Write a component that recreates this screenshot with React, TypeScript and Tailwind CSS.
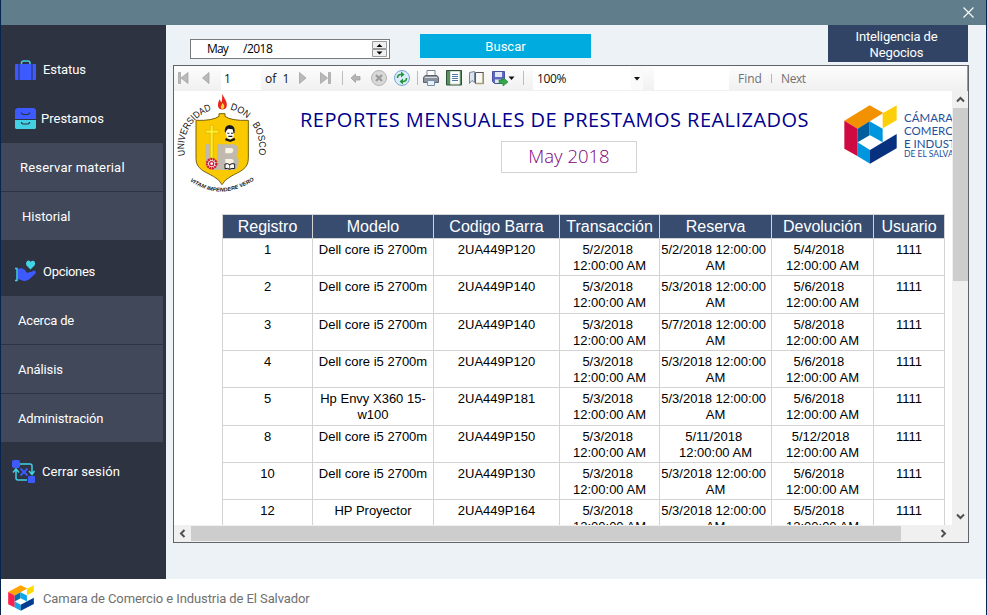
import React from "react";

const din = "font-['Roboto','Liberation_Sans',sans-serif]";
const ui = "font-['Open_Sans','Noto_Sans',sans-serif]";
const arial = "font-['Liberation_Sans',Arial,sans-serif]";

const rows = [
  { h: "h-[37px]", c: ["1", "Dell core i5 2700m", "2UA449P120", "5/2/2018 \n12:00:00 AM", "5/2/2018 12:00:00 \nAM", "5/4/2018  \n12:00:00 AM", "1111"] },
  { h: "h-[38px]", c: ["2", "Dell core i5 2700m", "2UA449P140", "5/3/2018 \n12:00:00 AM", "5/3/2018 12:00:00 \nAM", "5/6/2018  \n12:00:00 AM", "1111"] },
  { h: "h-[37px]", c: ["3", "Dell core i5 2700m", "2UA449P140", "5/3/2018 \n12:00:00 AM", "5/7/2018 12:00:00 \nAM", "5/8/2018  \n12:00:00 AM", "1111"] },
  { h: "h-[37px]", c: ["4", "Dell core i5 2700m", "2UA449P120", "5/3/2018 \n12:00:00 AM", "5/3/2018 12:00:00 \nAM", "5/6/2018  \n12:00:00 AM", "1111"] },
  { h: "h-[38px]", c: ["5", "Hp Envy X360 15-\nw100", "2UA449P181", "5/3/2018 \n12:00:00 AM", "5/3/2018 12:00:00 \nAM", "5/6/2018  \n12:00:00 AM", "1111"] },
  { h: "h-[37px]", c: ["8", "Dell core i5 2700m", "2UA449P150", "5/3/2018 \n12:00:00 AM", "5/11/2018 \n12:00:00 AM", "5/12/2018 \n12:00:00 AM", "1111"] },
  { h: "h-[37px]", c: ["10", "Dell core i5 2700m", "2UA449P130", "5/3/2018 \n12:00:00 AM", "5/3/2018 12:00:00 \nAM", "5/6/2018  \n12:00:00 AM", "1111"] },
  { h: "h-[37px]", c: ["12", "HP Proyector", "2UA449P164", "5/3/2018 \n12:00:00 AM", "5/3/2018 12:00:00 \nAM", "5/5/2018  \n12:00:00 AM", "1111"] },
];
const headers = ["Registro", "Modelo", "Codigo Barra", "Transacción", "Reserva", "Devolución", "Usuario"];
const cols = "grid grid-cols-[90px_121px_126px_100px_112px_102px_71px]";

function ChamberMark({ className, bright }: { className: string; bright?: boolean }) {
  const c = bright
    ? { o: "#ffa400", r: "#ff1f4b", y: "#ffdc00", d: "#0070ad", l: "#12a8ea", n: "#003d91" }
    : { o: "#f39200", r: "#cf0a42", y: "#fccf0a", d: "#005e9c", l: "#0096df", n: "#07307f" };
  return (
    <svg viewBox="42 46 159 177" preserveAspectRatio="none" className={className}>
      <path d="M43 93 119 47 160 70 83 117Z" fill={c.o} />
      <path d="M43 93 83 117V200L43 177Z" fill={c.r} />
      <path d="M158 71 200 47V92L158 116Z" fill={c.y} />
      <path d="M83 117 119 95V137L83 158Z" fill={c.d} />
      <path d="M119 95 158 117V158L119 136Z" fill={c.l} />
      <path d="M83 158 120 181V222L83 200Z" fill={c.l} />
      <path d="M120 181 200 133V176L120 222Z" fill={c.n} />
    </svg>
  );
}

function UniversityCrest() {
  return (
    <svg viewBox="12 3 318 321" className="h-[107px] w-[106px] shrink-0">
      <defs>
        <path id="arcL" d="M45 196A116 116 0 0 1 131 59" />
        <path id="arcR" d="M180 58A116 116 0 0 1 264 200" />
        <path id="arcB" d="M60 273Q155 338 256 268" />
      </defs>
      <path d="M78 91Q128 93 147 79V71H165V79Q184 93 235 91V205C235 238 209 244 183 259Q163 269 156 284Q149 269 130 259C104 244 78 238 78 205Z" fill="#fbc900" stroke="#77620f" strokeWidth="3" />
      <path d="M158 12C163 29 173 33 170 49C168 62 145 62 144 48C143 39 147 33 149 28L154 38C158 28 155 20 158 12Z" fill="#e8281c" />
      <path d="M158 39C166 48 163 56 157 57C150 55 152 48 158 39Z" fill="#ffd33b" />
      <path d="M106 163H119V205Q119 222 132 222Q142 222 142 205V163H153V239H126Q106 235 106 211Z" fill="#bfb9b0" />
      <path d="M153 163H190Q206 165 205 180Q205 192 198 198Q207 202 206 216Q205 240 189 240H153Z" fill="#bfb9b0" />
      <path d="M166 174H183Q190 174 190 181T183 190H166ZM166 207H183Q191 207 191 214T183 222H166Z" fill="#f8f4e4" />
      <path d="M121 106H129V121H146V129H129V213H121V129H107V121H121Z" fill="#ffef2b" stroke="#b58a00" />
      <circle cx="125" cy="221" r="14" fill="#fff" stroke="#cf1930" strokeWidth="7" strokeDasharray="6 1.5" />
      <circle cx="125" cy="221" r="6" fill="#fff" stroke="#cf1930" strokeWidth="4" />
      <path d="M166 123Q164 105 180 105Q195 106 193 124L190 142Q181 151 171 143Z" fill="#fff" />
      <path d="M165 130Q161 107 178 105Q197 105 194 128L191 131 188 118 174 116 169 122ZM172 128H178V131H172ZM183 128H189V131H183ZM175 137H187V141H175ZM168 144 181 149 193 143 196 150 181 156 165 151Z" fill="#151515" />
      <path d="M165 222Q173 219 179 224Q186 219 194 222V236Q185 233 179 238Q173 233 165 236Z" fill="#fff" stroke="#151515" strokeWidth="3" />
      <path d="M179 223V237" stroke="#151515" strokeWidth="2" />
      <g fontFamily="Liberation Sans, sans-serif" fill="#111">
        <text fontSize="29"><textPath href="#arcL" textLength="172" lengthAdjust="spacingAndGlyphs">UNIVERSIDAD</textPath></text>
        <text fontSize="29"><textPath href="#arcR" textLength="178" lengthAdjust="spacingAndGlyphs">DON &#160; BOSCO</textPath></text>
        <text fontSize="16" fontWeight="bold" fontStyle="italic"><textPath href="#arcB" textLength="206" lengthAdjust="spacingAndGlyphs">VITAM IMPENDERE VERO</textPath></text>
      </g>
    </svg>
  );
}

function Toolbar() {
  return (
    <div className={`flex h-[25px] items-center border-r border-[#9a9a9a] bg-gradient-to-b from-[#fdfdfd] to-[#f0f0f0] text-[12px] text-[#111] ${ui}`}>
      <svg className="h-[25px] w-[47px]" viewBox="0 0 47 25" fill="#b9b9b9" stroke="#9d9d9d" strokeWidth=".7">
        <path d="M4.5 6.5H6.5V17.5H4.5ZM14 6.5V17.5L7 12ZM35 6.5V17.5L28.500 12Z" />
      </svg>
      <span className="flex h-[23px] w-10 items-center bg-white pl-[3px]">1</span>
      <span className="w-9 whitespace-pre pl-1">of{"  "}1</span>
      <svg className="h-[25px] w-[124px]" viewBox="297 66 124 25" fill="none">
        <path d="M299.500 72.500V83.500L306 78ZM320.500 72.500V83.500L327.500 78ZM328.500 72.500H330.500V83.500H328.500Z" fill="#b9b9b9" stroke="#9d9d9d" strokeWidth=".7" />
        <path d="M342.500 71V85M417.500 71V85" stroke="#bdbdbd" />
        <path d="M351 78 355.500 74V76.500H360V80H355.500V82.500Z" fill="#b5b5b5" stroke="#999" strokeWidth=".7" />
        <circle cx="379" cy="78" r="7.500" fill="#d9d9d9" stroke="#b4b4b4" />
        <path d="M376 75 382 81M382 75 376 81" stroke="#9b9b9b" strokeWidth="2.300" />
        <circle cx="402" cy="78" r="7.500" fill="#dcecf9" stroke="#78a7d3" />
        <path d="M397.500 78Q397.500 74.500 401 74.500M406.500 78Q406.500 81.500 403 81.500" stroke="#22973b" strokeWidth="1.600" />
        <path d="M401 71.500 404.500 74.500 401 77.500ZM403 78.500 399.500 81.500 403 84.500Z" fill="#22973b" />
      </svg>
      <svg className="h-[25px] w-[112px]" viewBox="421 66 112 25" fill="none">
        <path d="M427 70.500H435V76H427Z" fill="#fff" stroke="#788493" />
        <path d="M425 75.500H437L438.500 77.500V82.500H423.500V77.500Z" fill="#8c929c" stroke="#5d6470" />
        <path d="M425 77.500H437" stroke="#d7dae0" />
        <path d="M427.500 80.500H434.500V85.500H427.500Z" fill="#e7f1fb" stroke="#7590aa" />
        <path d="M446.500 70.500H461.500V85H446.500Z" fill="#5b8f61" stroke="#2d5237" />
        <path d="M450.500 71.500H459.500V84H450.500Z" fill="#fff" stroke="#d8e0d8" />
        <path d="M452 74.500H458M452 76.500H458M452 78.500H458M452 80.500H458" stroke="#4f76a8" />
        <path d="M469.500 72.500 474.500 71.500V82.500L472 80.500 469.500 83.500Z" fill="#dce3ed" stroke="#76879d" />
        <path d="M475.500 72.500H483.500V83.500H475.500Z" fill="#f8f8f4" stroke="#55585e" />
        <path d="M476 83.500H483V73" stroke="#aaa17e" strokeWidth="1.500" />
        <path d="M492.500 71.500H504.500V83.500H494.500L492.500 81.500Z" fill="#5e69be" stroke="#4851a0" />
        <path d="M495 72H502V77H495ZM495 79.500H501V83H495Z" fill="#e2e7f6" />
        <path d="M499 80H503V77L508 82 503 86V83.500H499Z" fill="#33a94a" stroke="#1f7d31" strokeWidth=".6" />
        <path d="M508.500 76.500H514.500L511.500 80Z" fill="#111" />
        <path d="M523.500 71V85" stroke="#bdbdbd" />
      </svg>
      <div className="flex h-[23px] w-[110px] items-center justify-between bg-white pl-1">
        <span className="tracking-[-0.4px]">100%</span>
        <span className="flex h-full w-3 items-center justify-center bg-[#fafafa]">
          <svg className="h-[4px] w-[6px]" viewBox="0 0 6 4"><path d="M0 0H6L3 3.500Z" fill="#111" /></svg>
        </span>
      </div>
      <span className="ml-[11px] h-[23px] w-[75px] bg-white" />
      <span className="ml-[9px] w-[33px] text-[#717171]">Find</span>
      <span className="h-[9px] w-[10px] border-l border-[#b5b5b5]" />
      <span className="tracking-[-0.4px] text-[#717171]">Next</span>
    </div>
  );
}

function Report() {
  return (
    <div className="h-[434px] w-[778px] overflow-hidden bg-white">
      <div className="flex h-[123px]">
        <UniversityCrest />
        <div className="flex w-[564px] shrink-0 flex-col pt-[15px]">
          <div className={`ml-[20px] whitespace-nowrap text-[20px] leading-[28px] tracking-[0.460px] text-[#00008b] ${ui}`}>REPORTES MENSUALES DE PRESTAMOS REALIZADOS</div>
          <div className={`mt-[7px] ml-[221px] flex h-8 w-[136px] items-center justify-center border border-[#d3d3d3] pb-[2px] text-[18.500px] font-light text-[#800080] ${ui}`}>May 2018</div>
        </div>
        <ChamberMark className="mt-[14px] h-[59px] w-[53px] shrink-0" />
        <div className="w-[55px] shrink-0 overflow-hidden whitespace-nowrap pl-[7px] pt-[20px] font-['Lato',sans-serif] text-[11.500px] leading-[13px] text-[#24509a]">
          <div>CÁMARA DE</div>
          <div>COMERCIO</div>
          <div>E INDUSTRIA</div>
          <div className="text-[8.500px] leading-[9px]">DE EL SALVADOR</div>
        </div>
      </div>
      <div className={`ml-[48px] w-[723px] border-l border-t border-[#d3d3d3] ${arial}`}>
        <div className={`${cols} h-6 text-[16px] leading-[23px] text-white`}>
          {headers.map((h) => (
            <div key={h} className="flex justify-center border-r border-b border-[#d3d3d3] bg-[#384c70]">{h}</div>
          ))}
        </div>
        {rows.map((r) => (
          <div key={r.c[0]} className={`${cols} ${r.h} text-[13px] leading-4 text-black`}>
            {r.c.map((t, i) => (
              <div key={i} className="flex justify-center whitespace-pre border-r border-b border-[#d3d3d3] pt-[3px] text-center">{t}</div>
            ))}
          </div>
        ))}
      </div>
    </div>
  );
}

function Chevron({ d }: { d: string }) {
  return (
    <svg className="h-[9px] w-[9px]" viewBox="0 0 9 9" fill="none" stroke="#505050" strokeWidth="2"><path d={d} /></svg>
  );
}

function Sub({ children, pad }: { children: React.ReactNode; pad: string }) {
  return <div className={`flex h-12 w-[162px] items-center bg-[#40485a] pt-[2px] ${pad}`}>{children}</div>;
}

function Sidebar() {
  return (
    <nav className={`flex h-[554px] w-[165px] shrink-0 flex-col bg-[#2d3341] text-[13px] text-white ${din}`}>
      <div className="flex h-[69px] items-center pt-[20px] pl-[14px]">
        <svg className="h-5 w-[21px]" viewBox="0 0 21 20">
          <path d="M6.500 5V3Q6.500 1 8.500 1H13Q15 1 15 3V5" fill="none" stroke="#43cfe4" strokeWidth="1.500" />
          <path d="M1 4H3.500V20H1Q0 20 0 19V5Q0 4 1 4ZM5 4H16V20H5ZM17.500 4H20Q21 4 21 5V19Q21 20 20 20H17.500Z" fill="#3d5afe" />
          <path d="M3.500 4H5V20H3.500ZM16 4H17.500V20H16Z" fill="#3145b8" />
        </svg>
        <span className="ml-[7px] tracking-[-0.1px]">Estatus</span>
      </div>
      <div className="flex h-[49px] items-center pl-[14px]">
        <svg className="h-[21px] w-[21px]" viewBox="0 0 21 21">
          <path d="M2 0H19L21 2V11H0V2Z" fill="#3d5afe" /><path d="M0 12H21V20L20 21H1L0 20Z" fill="#43cfe4" />
          <path d="M6.500 4.500V5.500L8 6.500H13L14.500 5.500V4.500M6.500 14V15L8 16H13L14.500 15V14" fill="none" stroke="#2d3341" strokeWidth="1.200" />
        </svg>
        <span className="ml-[5px]">Prestamos</span>
      </div>
      <div className="flex flex-col gap-px">
        <Sub pad="pl-[19px] tracking-[0.2px]">Reservar material</Sub>
        <Sub pad="pl-[21px]">Historial</Sub>
      </div>
      <div className="flex h-14 items-center pt-[6px] pl-[14px]">
        <svg className="h-[22px] w-[21px]" viewBox="0 0 21 22">
          <path d="M0 8.500H2V20.500H0" fill="none" stroke="#43cfe4" strokeWidth="1.500" />
          <path d="M3 9Q7 7 10 10L12 13Q14 12 16 12L19 10.500Q22 11 20 14L14 19.500Q10 22 6 20L3 19Z" fill="#3d5afe" />
          <path d="M15.500 9.500 11.500 5.500Q10 2 13 .5Q15 0 15.500 2Q17 0 19 1Q21 3 19.500 5.500Z" fill="#43d3e8" />
        </svg>
        <span className="mt-[2px] ml-[7px] tracking-[-0.3px]">Opciones</span>
      </div>
      <div className="flex flex-col gap-px">
        <Sub pad="pl-[17px] tracking-[-0.2px]">Acerca de</Sub>
        <Sub pad="pl-[17px] tracking-[-0.1px]">Análisis</Sub>
        <Sub pad="pl-[17px] tracking-[-0.150px]">Administración</Sub>
      </div>
      <div className="flex h-[59px] items-center pl-[11px]">
        <svg className="h-[23px] w-[23px]" viewBox="0 0 23 23" fill="none">
          <path d="M8 4H18Q20 4 20 6V13M15 20H6Q4 20 4 18V10M17 11 20 14.500 22.500 11M1 12.500 4 9 7 12.500" stroke="#43cfe4" strokeWidth="1.500" />
          <path d="M8.500 8.500 15.500 15.500M15.500 8.500 8.500 15.500" stroke="#3d5afe" strokeWidth="1.800" />
          <rect width="8" height="8" rx="2" fill="#3d5afe" /><rect x="16" y="16" width="7" height="7" rx=".7" fill="#3d5afe" />
        </svg>
        <span className="ml-[7px] tracking-[0.1px]">Cerrar sesión</span>
      </div>
    </nav>
  );
}

export default function App() {
  return (
    <div className="flex h-[615px] w-[987px] flex-col overflow-hidden border-x border-x-[#06264f] bg-white">
      <header className="flex h-[25px] shrink-0 items-center justify-end bg-[#5f7d8b] pr-3">
        <svg className="h-[11px] w-[11px]" viewBox="0 0 11 11"><path d="M.5 .5 10.500 10.500M10.500 .5 .5 10.500" stroke="#fff" strokeWidth="1.100" /></svg>
      </header>
      <div className="flex h-[554px] shrink-0">
        <Sidebar />
        <main className="flex flex-1 flex-col bg-[#edf2f7]">
          <div className="flex h-10 items-start">
            <div className={`mt-[14px] ml-6 flex h-5 w-[200px] items-center border border-[#7a7a7a] bg-white text-[12px] text-black ${ui}`}>
              <span className="ml-4 w-9 tracking-[-0.8px]">May</span>
              <span className="flex-1 tracking-[-0.5px]">/2018</span>
              <svg className="mr-[2px] h-4 w-[15px]" viewBox="0 0 15 16">
                <path d="M.5 .5H14.500V7.500H.5ZM.5 8.500H14.500V15.500H.5Z" fill="#f0f0f0" stroke="#9a9a9a" />
                <path d="M4.500 6H10.500L7.500 3ZM4.500 10.500H10.500L7.500 13.500Z" fill="#000" />
              </svg>
            </div>
            <button className={`mt-[9px] ml-[30px] h-6 w-[171px] bg-[#00acdf] pt-[2px] text-[13px] text-white ${din}`}>Buscar</button>
            <button className={`ml-[237px] h-[37px] w-[140px] bg-[#324465] pt-[2px] pr-[3px] text-[13px] leading-4 tracking-[-0.150px] text-white ${din}`}>Inteligencia de<br />Negocios</button>
          </div>
          <section className="ml-[7px] flex h-[478px] w-[796px] flex-col border border-[#626469] bg-[#f0f0f0]">
            <Toolbar />
            <div className="flex">
              <Report />
              <div className="flex w-4 flex-col items-center">
                <div className="flex h-[17px] items-center"><Chevron d="M1 6.500 4.500 3 8 6.500" /></div>
                <div className="h-[173px] w-[15px] bg-[#cdcdcd]" />
                <div className="mt-auto flex h-[17px] items-center"><Chevron d="M1 2.500 4.500 6 8 2.500" /></div>
              </div>
            </div>
            <div className="flex h-[17px] w-[778px] items-center">
              <div className="flex w-[17px] justify-center"><Chevron d="M6.500 1 3 4.500 6.500 8" /></div>
              <div className="h-[15px] w-[710px] bg-[#cdcdcd]" />
              <div className="ml-auto flex w-[17px] justify-center"><Chevron d="M2.500 1 6 4.500 2.500 8" /></div>
            </div>
          </section>
        </main>
      </div>
      <footer className={`flex h-9 items-center pl-[7px] text-[13px] tracking-[-0.090px] text-[#707070] ${din}`}>
        <ChamberMark bright className="mt-[2px] h-[26px] w-[26px]" />
        <span className="mt-[3px] ml-[9px]">Camara de Comercio e Industria de El Salvador</span>
      </footer>
    </div>
  );
}
